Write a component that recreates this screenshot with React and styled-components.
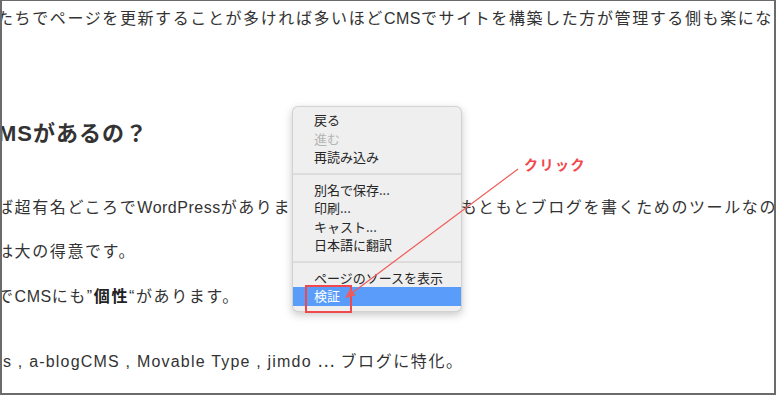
import styled, { createGlobalStyle } from "styled-components";

const GlobalStyle = createGlobalStyle`
  html, body {
    margin: 0;
    padding: 0;
    background: #ffffff;
  }
`;

const menuGroups = [
  [
    { label: "戻る" },
    { label: "進む", disabled: true },
    { label: "再読み込み" },
  ],
  [
    { label: "別名で保存..." },
    { label: "印刷..." },
    { label: "キャスト..." },
    { label: "日本語に翻訳" },
  ],
  [{ label: "ページのソースを表示" }, { label: "検証", active: true }],
];

const App = () => {
  return (
    <Frame>
      <GlobalStyle />
      <Article>
        <Para $gap={6}>
          たちでページを更新することが多ければ多いほど<Latin>CMS</Latin>
          でサイトを構築した方が管理する側も楽になります。
        </Para>
        <Heading>MSがあるの？</Heading>
        <Para $gap={47}>
          ば超有名どころで<Latin>WordPress</Latin>があります。実は
          <Latin>WordPress</Latin>はもともとブログを書くためのツールなので
        </Para>
        <Para $gap={20}>は大の得意です。</Para>
        <Para $gap={21}>
          で<Latin>CMS</Latin>にも”<b>個性</b>“があります。
        </Para>
        <Para $gap={39} $shift={6}>
          <Latin $spacing={1.2}>s , a-blogCMS , Movable Type , jimdo </Latin>
          <Ellipsis>⋯</Ellipsis> ブログに特化。
        </Para>
      </Article>

      <ContextMenu>
        {menuGroups.map((group, gi) => (
          <MenuGroup key={gi}>
            {gi > 0 && <Separator />}
            {group.map((item) => (
              <MenuItem
                key={item.label}
                $disabled={item.disabled}
                $active={item.active}
              >
                {item.label}
              </MenuItem>
            ))}
          </MenuGroup>
        ))}
      </ContextMenu>

      <Highlight />
      <Annotation width="776" height="395" viewBox="0 0 776 395">
        <line
          x1="516"
          y1="168"
          x2="350"
          y2="292"
          stroke="#f25a5a"
          strokeWidth="1.2"
        />
        <polygon points="343,297 348.5,287.5 353.5,294.5" fill="#f25a5a" />
      </Annotation>
      <ClickLabel>クリック</ClickLabel>
    </Frame>
  );
};

export default App;

const Frame = styled.div`
  position: relative;
  width: 776px;
  height: 395px;
  box-sizing: border-box;
  border: 2px solid #6b6b6b;
  border-top-width: 1px;
  overflow: hidden;
  background: #fff;
  font-family: "Liberation Sans", "Noto Sans CJK JP", sans-serif;
  color: #333;
`;

const Article = styled.div`
  margin-left: -5px;
  width: 1100px;
`;

const Para = styled.p`
  margin: ${({ $gap }) => $gap}px 0 0 ${({ $shift }) => $shift || 0}px;
  font-size: 16px;
  line-height: 24px;
  letter-spacing: 1.6px;
  white-space: nowrap;
  b {
    font-weight: 700;
    color: #222;
  }
`;

const Latin = styled.span`
  letter-spacing: ${({ $spacing }) => $spacing ?? 0.5}px;
`;

const Ellipsis = styled.span`
  font-family: "Noto Sans CJK JP", sans-serif;
  letter-spacing: 0;
`;

const Heading = styled.h2`
  margin: 88px 0 0 1px;
  font-size: 22px;
  line-height: 30px;
  font-weight: 700;
  letter-spacing: 1px;
  color: #333;
`;

const ContextMenu = styled.div`
  position: absolute;
  left: 290px;
  top: 105px;
  width: 170px;
  box-sizing: border-box;
  padding: 4px 0 5px;
  background: #efefef;
  border: 1px solid rgba(0, 0, 0, 0.12);
  border-radius: 6px;
  box-shadow: 0 3px 9px rgba(0, 0, 0, 0.22);
  font-family: "Noto Sans CJK JP", sans-serif;
`;

const MenuGroup = styled.div`
  display: flex;
  flex-direction: column;
`;

const Separator = styled.div`
  height: 2px;
  margin: 6px 0;
  background: #dcdcdc;
`;

const MenuItem = styled.div`
  height: 18.5px;
  line-height: 18.5px;
  padding-left: 21px;
  font-size: 13px;
  color: ${({ $disabled, $active }) =>
    $active ? "#fff" : $disabled ? "#b4b4b4" : "#262626"};
  background: ${({ $active }) => ($active ? "#5a9cf9" : "transparent")};
  white-space: nowrap;
`;

const Highlight = styled.div`
  position: absolute;
  left: 303px;
  top: 284px;
  width: 47px;
  height: 28px;
  box-sizing: border-box;
  border: 2px solid #f0484c;
`;

const Annotation = styled.svg`
  position: absolute;
  left: 0;
  top: 0;
  pointer-events: none;
`;

const ClickLabel = styled.div`
  position: absolute;
  left: 522px;
  top: 153px;
  font-family: "Noto Sans CJK JP", sans-serif;
  font-size: 14px;
  line-height: 20px;
  font-weight: 700;
  letter-spacing: 1.5px;
  color: #f2474d;
`;
